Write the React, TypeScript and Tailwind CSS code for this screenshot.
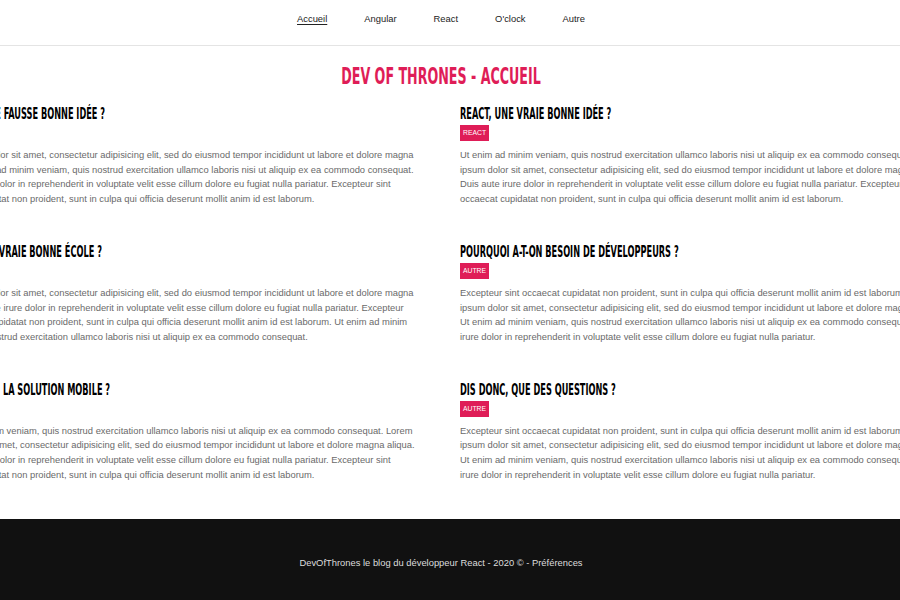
import React from 'react';

type Post = {
  title: string;
  tag: string;
  lines: string[];
};

// paragraphs are split the same way the original page wraps them
const loremA = [
  'Lorem ipsum dolor sit amet, consectetur adipisicing elit, sed do eiusmod tempor incididunt ut labore et dolore magna',
  'aliqua. Ut enim ad minim veniam, quis nostrud exercitation ullamco laboris nisi ut aliquip ex ea commodo consequat.',
  'Duis aute irure dolor in reprehenderit in voluptate velit esse cillum dolore eu fugiat nulla pariatur. Excepteur sint',
  'occaecat cupidatat non proident, sunt in culpa qui officia deserunt mollit anim id est laborum.',
];
const loremB = [
  'Ut enim ad minim veniam, quis nostrud exercitation ullamco laboris nisi ut aliquip ex ea commodo consequat. Lorem',
  'ipsum dolor sit amet, consectetur adipisicing elit, sed do eiusmod tempor incididunt ut labore et dolore magna aliqua.',
  'Duis aute irure dolor in reprehenderit in voluptate velit esse cillum dolore eu fugiat nulla pariatur. Excepteur sint',
  'occaecat cupidatat non proident, sunt in culpa qui officia deserunt mollit anim id est laborum.',
];
const loremC = [
  'Lorem ipsum dolor sit amet, consectetur adipisicing elit, sed do eiusmod tempor incididunt ut labore et dolore magna',
  'aliqua. Duis aute irure dolor in reprehenderit in voluptate velit esse cillum dolore eu fugiat nulla pariatur. Excepteur',
  'sint occaecat cupidatat non proident, sunt in culpa qui officia deserunt mollit anim id est laborum. Ut enim ad minim',
  'veniam, quis nostrud exercitation ullamco laboris nisi ut aliquip ex ea commodo consequat.',
];
const loremD = [
  'Excepteur sint occaecat cupidatat non proident, sunt in culpa qui officia deserunt mollit anim id est laborum. Lorem',
  'ipsum dolor sit amet, consectetur adipisicing elit, sed do eiusmod tempor incididunt ut labore et dolore magna aliqua.',
  'Ut enim ad minim veniam, quis nostrud exercitation ullamco laboris nisi ut aliquip ex ea commodo consequat. Duis aute',
  'irure dolor in reprehenderit in voluptate velit esse cillum dolore eu fugiat nulla pariatur.',
];

const posts: Post[] = [
  { title: 'Angular, une fausse bonne idée ?', tag: 'Angular', lines: loremA },
  { title: 'React, une vraie bonne idée ?', tag: 'React', lines: loremB },
  { title: "O'clock, une vraie bonne école ?", tag: "O'clock", lines: loremC },
  { title: 'Pourquoi a-t-on besoin de développeurs ?', tag: 'Autre', lines: loremD },
  { title: 'React Native, la solution mobile ?', tag: 'React', lines: loremB },
  { title: 'Dis donc, que des questions ?', tag: 'Autre', lines: loremD },
];

const links = ['Accueil', 'Angular', 'React', "O'clock", 'Autre'];

const App: React.FC = () => {
  return (
    <div className="w-full h-screen overflow-hidden bg-white flex flex-col font-['Liberation_Sans',Arial,sans-serif]">
      <header className="h-[46px] shrink-0 pb-[6px] border-b border-[#e4e4e4] flex items-center justify-center gap-[37px] pr-[18px] text-[9.4px] text-[#222]">
        {links.map((link, i) => (
          <a key={link} href="#" className={i === 0 ? 'underline underline-offset-2' : ''}>
            {link}
          </a>
        ))}
      </header>

      <main className="flex flex-col items-center pr-[18px] shrink-0">
        <h1 className="mt-[16px] h-[28px] text-[23px] leading-[28px] font-bold uppercase text-[#df1d57] font-['DejaVu_Sans_Condensed','DejaVu_Sans',sans-serif]">
          <span className="inline-block origin-center scale-x-[0.612]">Dev of Thrones - Accueil</span>
        </h1>

        <div className="mt-[15px] ml-[3px] w-[1023px] grid grid-cols-[494px_494px] gap-x-[35px] gap-y-[36px]">
          {posts.map((post) => (
            <article key={post.title} className="flex flex-col items-start">
              <h2 className="origin-left scale-x-[0.557] whitespace-nowrap text-[16.4px] leading-[18px] font-bold uppercase text-black font-['DejaVu_Sans_Condensed','DejaVu_Sans',sans-serif]">
                {post.title}
              </h2>
              <span className="mt-[2px] h-[16px] px-[3px] bg-[#df1d57] text-white text-[6.8px] leading-[16px] uppercase">
                {post.tag}
              </span>
              <p className="mt-[7px] whitespace-nowrap text-[9.4px] leading-[14.7px] text-[#6a6a6a]">
                {post.lines.map((line, i) => (
                  <React.Fragment key={i}>
                    {line}
                    {i < post.lines.length - 1 && <br />}
                  </React.Fragment>
                ))}
              </p>
            </article>
          ))}
        </div>
      </main>

      <footer className="mt-[37px] flex-1 bg-[#111] flex justify-center pt-[37px] pr-[18px] text-[9.4px] text-[#ddd]">
        DevOfThrones le blog du développeur React - 2020 © - Préférences
      </footer>
    </div>
  );
};

export default App;
